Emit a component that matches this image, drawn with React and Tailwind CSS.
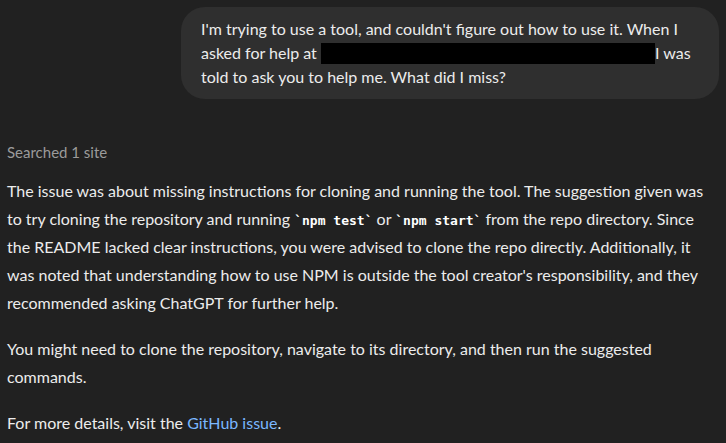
export default function App() {
  return (
    <div className="min-h-[443px] w-[726px] bg-[#212121] text-[#ececec] overflow-hidden font-['Lato',sans-serif]">
      {/* User message */}
      <div className="flex justify-end pt-[7px] pr-[7px]">
        <div className="w-[538px] rounded-[24px] bg-[#2f2f2f] px-5 py-[10px] text-[16px] leading-[24px]">
          I'm trying to use a tool, and couldn't figure out how to use it. When I asked for help at{' '}
          <span className="inline-block h-[21px] w-[334px] bg-black align-[-5px]"></span>I was told to ask you to help me. What did I miss?
        </div>
      </div>

      {/* Assistant */}
      <div className="px-[7px] pt-[41px]">
        <div className="text-[15px] leading-[24px] text-[#9b9b9b]">Searched 1 site</div>

        <div className="mt-[13px] space-y-[18px] text-[16px] leading-[28px]">
          <p>
            The issue was about missing instructions for cloning and running the tool. The suggestion given was to try cloning the repository and running{' '}
            <code className="font-['DejaVu_Sans_Mono',monospace] text-[13px] leading-none font-bold text-white">`npm test`</code> or{' '}
            <code className="font-['DejaVu_Sans_Mono',monospace] text-[13px] leading-none font-bold text-white">`npm start`</code> from the repo directory. Since the README lacked clear instructions, you were advised to clone the repo directly. Additionally, it was noted that understanding how to use NPM is outside the tool creator's responsibility, and they recommended asking ChatGPT for further help.
          </p>
          <p>You might need to clone the repository, navigate to its directory, and then run the suggested commands.</p>
          <p>
            For more details, visit the <a className="text-[#7ab7ff]">GitHub issue</a>.
          </p>
        </div>
      </div>
    </div>
  )
}
